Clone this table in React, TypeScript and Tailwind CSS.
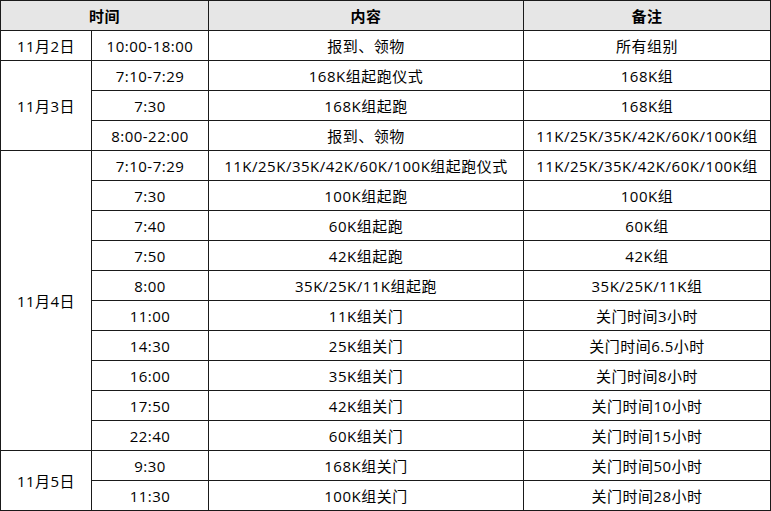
import React from 'react';

type Row = { date?: string; span?: number; time: string; content: string; note: string };

const rows: Row[] = [
  { date: '11月2日', span: 1, time: '10:00-18:00', content: '报到、领物', note: '所有组别' },
  { date: '11月3日', span: 3, time: '7:10-7:29', content: '168K组起跑仪式', note: '168K组' },
  { time: '7:30', content: '168K组起跑', note: '168K组' },
  { time: '8:00-22:00', content: '报到、领物', note: '11K/25K/35K/42K/60K/100K组' },
  { date: '11月4日', span: 10, time: '7:10-7:29', content: '11K/25K/35K/42K/60K/100K组起跑仪式', note: '11K/25K/35K/42K/60K/100K组' },
  { time: '7:30', content: '100K组起跑', note: '100K组' },
  { time: '7:40', content: '60K组起跑', note: '60K组' },
  { time: '7:50', content: '42K组起跑', note: '42K组' },
  { time: '8:00', content: '35K/25K/11K组起跑', note: '35K/25K/11K组' },
  { time: '11:00', content: '11K组关门', note: '关门时间3小时' },
  { time: '14:30', content: '25K组关门', note: '关门时间6.5小时' },
  { time: '16:00', content: '35K组关门', note: '关门时间8小时' },
  { time: '17:50', content: '42K组关门', note: '关门时间10小时' },
  { time: '22:40', content: '60K组关门', note: '关门时间15小时' },
  { date: '11月5日', span: 2, time: '9:30', content: '168K组关门', note: '关门时间50小时' },
  { time: '11:30', content: '100K组关门', note: '关门时间28小时' },
];

const cell = 'border border-[#1a1a1a] h-[30px] p-0 text-center align-middle whitespace-nowrap';

export default function App() {
  return (
    <div className="w-[771px] h-[511px] bg-white text-[15px] tracking-[0.5px] leading-[20px] text-black font-['Open_Sans','Noto_Sans_CJK_SC',sans-serif]">
      <table className="table-fixed border-collapse w-[771px]">
        <colgroup>
          <col className="w-[91px]" />
          <col className="w-[117px]" />
          <col className="w-[315px]" />
          <col className="w-[247px]" />
        </colgroup>
        <thead>
          <tr className="bg-[#e6e6e6]">
            <th colSpan={2} className={`${cell} font-bold`}>时间</th>
            <th className={`${cell} font-bold`}>内容</th>
            <th className={`${cell} font-bold`}>备注</th>
          </tr>
        </thead>
        <tbody>
          {rows.map((r, i) => (
            <tr key={i}>
              {r.date && (
                <td rowSpan={r.span} className={cell}>{r.date}</td>
              )}
              <td className={cell}>{r.time}</td>
              <td className={cell}>{r.content}</td>
              <td className={cell}>{r.note}</td>
            </tr>
          ))}
        </tbody>
      </table>
    </div>
  );
}
